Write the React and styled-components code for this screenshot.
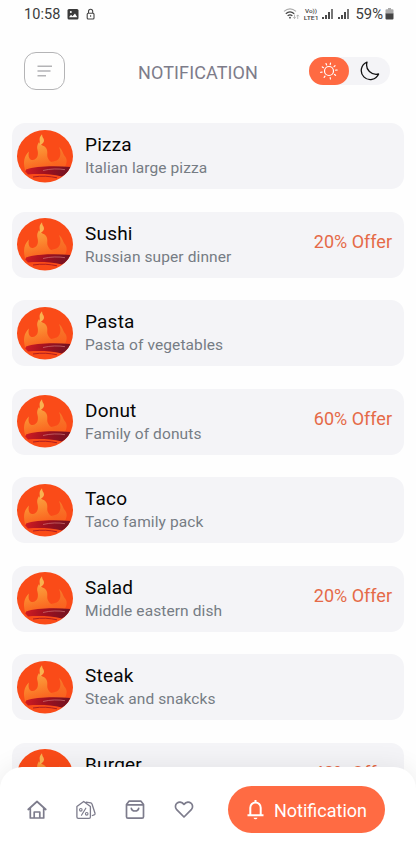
import React from 'react';
import styled, { createGlobalStyle } from 'styled-components';

const GlobalStyle = createGlobalStyle`
    * {
        box-sizing: border-box;
    }
    body {
        margin: 0;
        background-color: #ffffff;
        font-family: Roboto, sans-serif;
    }
    svg {
        display: block;
        flex-shrink: 0;
    }
    button {
        font-family: inherit;
        border: none;
        padding: 0;
        background: none;
    }
`
const Screen = styled.div`
    position: relative;
    height: 861px;
    overflow: hidden;
    background-color: #fefefe;
`
const StatusBar = styled.div`
    height: 28px;
    padding: 0 22px 0 24px;
    display: flex;
    align-items: center;
    justify-content: space-between;
    color: #3c3c3c;
`
const StatusGroup = styled.div`
    display: flex;
    align-items: center;
`
const Clock = styled.span`
    font-size: 14.5px;
    letter-spacing: 0.1px;
    width: 42.5px;
    white-space: nowrap;
`
const Percent = styled.span`
    font-size: 14.8px;
    margin: 0 2px 0 4px;
`
const Header = styled.header`
    height: 95px;
    padding: 24px 26px 0 24px;
    display: flex;
    align-items: flex-start;
    justify-content: space-between;
`
const MenuButton = styled.button`
    width: 41px;
    height: 38px;
    border: 1px solid #b4b4b6;
    border-radius: 12px;
    display: flex;
    align-items: center;
    justify-content: center;
`
const Title = styled.h1`
    margin: 0 0 0 22px;
    font-size: 18px;
    line-height: 41px;
    font-weight: 400;
    letter-spacing: 0.1px;
    color: #7d7c8a;
`
const Toggle = styled.div`
    width: 81px;
    height: 28px;
    margin-top: 5px;
    display: flex;
    border-radius: 14px;
    background-color: #f4f4f7;
`
const ToggleSide = styled.div`
    width: 40.5px;
    height: 28px;
    display: flex;
    align-items: center;
    justify-content: center;
    border-radius: 14px;
    background-color: ${props => props.$active ? '#ff6a42' : 'transparent'};
`
const List = styled.main`
    padding: 0.4px 12px 0;
    display: flex;
    flex-direction: column;
    gap: 22.5px;
`
const Card = styled.article`
    height: 66px;
    flex-shrink: 0;
    padding: 0 12px 0 5px;
    display: flex;
    align-items: center;
    border-radius: 13px;
    background-color: #f4f4f7;
`
const CardText = styled.div`
    flex: 1;
    margin-left: 12px;
`
const Name = styled.h2`
    margin: 0;
    font-size: 19px;
    line-height: 24px;
    font-weight: 400;
    letter-spacing: 0.2px;
    color: #060606;
`
const Description = styled.p`
    margin: 0;
    font-size: 15.5px;
    line-height: 22px;
    letter-spacing: 0.1px;
    color: #767c84;
`
const Offer = styled.span`
    font-size: 18px;
    margin-bottom: 7px;
    color: #e56a48;
`
const Nav = styled.nav`
    position: absolute;
    left: 0;
    right: 0;
    bottom: 0;
    height: 94px;
    padding: 19px 31px 0 26px;
    display: flex;
    align-items: flex-start;
    justify-content: space-between;
    border-radius: 22px 22px 0 0;
    background-color: #ffffff;
    box-shadow: 0 0 26px rgba(0, 0, 0, 0.08);
`
const NavLinks = styled.div`
    height: 47px;
    display: flex;
    align-items: center;
    gap: 27px;
    color: #7d7c8c;
`
const ActiveTab = styled.button`
    width: 157px;
    height: 47px;
    padding-left: 17px;
    display: flex;
    align-items: center;
    border-radius: 24px;
    background-color: #ff6b43;
    color: #ffffff;
    font-size: 18px;
`
const TabLabel = styled.span`
    margin: 1px 0 0 8px;
`

const items = [
    { name: 'Pizza', description: 'Italian large pizza' },
    { name: 'Sushi', description: 'Russian super dinner', offer: '20% Offer' },
    { name: 'Pasta', description: 'Pasta of vegetables' },
    { name: 'Donut', description: 'Family of donuts', offer: '60% Offer' },
    { name: 'Taco', description: 'Taco family pack' },
    { name: 'Salad', description: 'Middle eastern dish', offer: '20% Offer' },
    { name: 'Steak', description: 'Steak and snakcks' },
    { name: 'Burger', description: 'Burger with cheese', offer: '40% Offer' },
]

const NavIcon = ({ children }) => (
    <svg width="22" height="22" viewBox="0 0 22 22" fill="none" stroke="currentColor" strokeWidth="1.7" strokeLinecap="round" strokeLinejoin="round">
        {children}
    </svg>
)

const Signal = () => (
    <svg width="16" height="14" viewBox="0 0 16 14" fill="#4a4a4a">
        <rect x="2" y="10" width="2" height="2" />
        <rect x="5" y="8" width="2" height="4" />
        <rect x="8" y="5" width="2" height="7" />
        <rect x="11" y="2" width="2" height="10" fill="#777" />
    </svg>
)

const Flame = ({ id }) => (
    <svg width="56" height="53" viewBox="0 0 56 53">
        <defs>
            <linearGradient id={`fire${id}`} x1="0" y1="0" x2="0.3" y2="1">
                <stop offset="0" stopColor="#f9a848" />
                <stop offset="0.5" stopColor="#fb8a30" />
                <stop offset="1" stopColor="#fa641f" />
            </linearGradient>
            <linearGradient id={`side${id}`} x1="0" y1="0" x2="0" y2="1">
                <stop offset="0" stopColor="#f67b2c" />
                <stop offset="1" stopColor="#fb5d1c" />
            </linearGradient>
            <linearGradient id={`dish${id}`} x1="0" y1="0" x2="1" y2="0">
                <stop offset="0" stopColor="#d01c22" />
                <stop offset="0.5" stopColor="#9c1020" />
                <stop offset="1" stopColor="#711322" />
            </linearGradient>
            <clipPath id={`round${id}`}>
                <ellipse cx="28" cy="26.2" rx="28" ry="26.2" />
            </clipPath>
        </defs>
        <g clipPath={`url(#round${id})`}>
            <rect width="56" height="53" fill="#fa4b18" />
            <path d="M30 39C31 33 33 32 38 31C43 30 45 24 42 17C46 20 45.500 24 48.500 27C51 31 49 35 47 39z" fill={`url(#side${id})`} />
            <path d="M8 40C6 32 7 26 12 21.500C10.500 27 13 30.500 16 30C21 29 21.500 24 20.500 20C19.500 16 21 14 22 12C23 16 29 15 30 20C31 24 29 26 32 30C34 33 38 33 40 39z" fill={`url(#fire${id})`} />
            <path d="M25 4.300C20.500 9 24 11 22.500 15.500C28 13 27.500 10 26 7.800C25.200 6.500 25.200 5.500 25 4.300z" fill="#f9b250" />
            <path d="M9 39.500C18 36 38 35.500 54 37L51 42.500C38 39.500 21 40 9 42z" fill={`url(#dish${id})`} />
            <path d="M8 41C20 38 38 39 52 42L45 46.500C32 43.500 19 44 11 44.500z" fill={`url(#dish${id})`} />
            <path d="M26 40.500C33 38.700 42 38.500 48 39.700" fill="none" stroke="#d98784" strokeWidth="0.6" />
            <path d="M16 47C25 45.500 33 46.300 40 47.800" fill="none" stroke="#a61920" strokeWidth="0.9" />
        </g>
    </svg>
)

const App = () => (
    <>
        <GlobalStyle />
        <Screen>
            <StatusBar>
                <StatusGroup>
                    <Clock>10:58</Clock>
                    <svg width="12" height="12" viewBox="0 0 12 12">
                        <rect x="0.5" y="1" width="11" height="10.5" rx="1.5" fill="#3a3a3a" />
                        <path d="M2 9.3l2-2.5 1.5 1.4L8 5.4l2.3 3.9z" fill="#fff" />
                        <circle cx="3.8" cy="4" r="1" fill="#fff" />
                    </svg>
                    <svg width="20" height="12" viewBox="0 0 20 12" fill="none" stroke="#444" strokeWidth="1.1">
                        <rect x="8.2" y="5.200" width="6.800" height="5.800" rx="1" />
                        <path d="M9.500 5V3.400a2.100 2.100 0 0 1 4.200 0V5M11.600 7.300v1.400" />
                    </svg>
                </StatusGroup>
                <StatusGroup>
                    <svg width="20" height="14" viewBox="0 0 20 14" fill="none" stroke="#444" strokeWidth="1.2">
                        <path d="M1 4.4q6-5.2 12 0" stroke="#aaa" />
                        <path d="M2.8 6.7q4.2-3.8 8.4 0M4.6 8.9q2.4-2.2 4.8 0" />
                        <circle cx="7" cy="10.7" r="0.9" fill="#444" stroke="none" />
                        <path d="M11.5 7.5v4M10.2 10.2l1.3 1.4 1.3-1.4M14.7 12V8M13.4 9.3l1.3-1.4L16 9.3" stroke="#aaa" strokeWidth="0.8" />
                    </svg>
                    <svg width="17" height="14" viewBox="0 0 17 14" fill="#444" fontFamily="Roboto, sans-serif" fontWeight="500">
                        <text x="2" y="6" fontSize="6" textLength="12" lengthAdjust="spacingAndGlyphs">Vo))</text>
                        <text x="0.8" y="13.200" fontSize="6" textLength="14.8" lengthAdjust="spacingAndGlyphs">LTE1</text>
                    </svg>
                    <Signal />
                    <Signal />
                    <Percent>59%</Percent>
                    <svg width="9" height="12" viewBox="0 0 9 12">
                        <path d="M3 0h3v1.3h1.5q1 0 1 1V6H.5V2.300q0-1 1-1H3z" fill="#aaa" />
                        <path d="M.5 5.500h8v5q0 1-1 1h-6q-1 0-1-1z" fill="#444" />
                    </svg>
                </StatusGroup>
            </StatusBar>

            <Header>
                <MenuButton>
                    <svg width="16" height="14" viewBox="0 0 16 14" stroke="#b3b3b6" strokeWidth="1.6">
                        <path d="M0.500 2.200h14.500M0.500 7h13M0.500 11.800h8.500" />
                    </svg>
                </MenuButton>
                <Title>NOTIFICATION</Title>
                <Toggle>
                    <ToggleSide $active>
                        <svg width="20" height="20" viewBox="0 0 20 20" fill="none" stroke="#fff" strokeWidth="1.2" strokeLinecap="round">
                            <circle cx="10" cy="10" r="4.500" />
                            <path d="M11.500 2.100l-.3 1.500M16 4.700l-1 .9M18.200 9l-1.500.1M16.600 14.300l-1.100-.8M11.400 18l-.2-1.500M5.100 16.300l.9-1.100M1.700 11.300L3.200 11M3.300 5.900l1.200.8M7 2.600l.6 1.300" />
                        </svg>
                    </ToggleSide>
                    <ToggleSide>
                        <svg width="20" height="20" viewBox="0 0 20 20" fill="none" stroke="#111" strokeWidth="1.3" strokeLinejoin="round">
                            <path d="M7 1.200A9 9 0 1 0 18.600 13C11.500 14.500 5 9 7 1.200z" />
                        </svg>
                    </ToggleSide>
                </Toggle>
            </Header>

            <List>
                {items.map((item, i) => (
                    <Card key={item.name}>
                        <Flame id={i} />
                        <CardText>
                            <Name>{item.name}</Name>
                            <Description>{item.description}</Description>
                        </CardText>
                        {item.offer && <Offer>{item.offer}</Offer>}
                    </Card>
                ))}
            </List>

            <Nav>
                <NavLinks>
                    <NavIcon>
                        <path d="M2.200 10.500L11 2.500l8.800 8M4.300 9v10h13.400V9M8.200 19v-6h5.600v6" />
                    </NavIcon>
                    <NavIcon>
                        <path d="M1.900 7.600L8.700 2.400l6.700 5.200v10.300q0 1.400-1.400 1.400H3.300q-1.400 0-1.400-1.400zM11.200 3.200l4.500.6q1 .2 1.300 1.200l3 9.200q.4 1.200-.8 1.600l-1.800.7" strokeWidth="1.3" />
                        <path d="M10.800 9.200l-4.300 7" strokeWidth="1.200" />
                        <circle cx="5.800" cy="10.800" r="1.300" strokeWidth="1.100" />
                        <circle cx="11.700" cy="14.800" r="1.300" strokeWidth="1.100" />
                    </NavIcon>
                    <NavIcon>
                        <path d="M2.500 5.500L5 2.200h12l2.500 3.300v12.200q0 1.500-1.500 1.500H4q-1.500 0-1.500-1.500zM2.500 5.800h17M7.300 9.300c.7 3.600 6.700 3.600 7.400 0" strokeWidth="1.700" />
                    </NavIcon>
                    <NavIcon>
                        <path d="M11 18L3.700 10.700C-.4 6 6.300-.2 11 5.400c4.700-5.600 11.400.6 7.300 5.300z" />
                    </NavIcon>
                </NavLinks>
                <ActiveTab>
                    <svg width="21" height="22" viewBox="0 0 21 22" fill="none" stroke="#fff" strokeWidth="2" strokeLinejoin="round">
                        <path d="M5.300 16V8.700a5.200 5.200 0 0 1 10.400 0V16M2.500 16.300h16M10.500 1v2.200" />
                        <path d="M8.500 18.800h4q-.5 1.500-2 1.500t-2-1.500z" fill="#fff" stroke="none" />
                    </svg>
                    <TabLabel>Notification</TabLabel>
                </ActiveTab>
            </Nav>
        </Screen>
    </>
)

export default App;
